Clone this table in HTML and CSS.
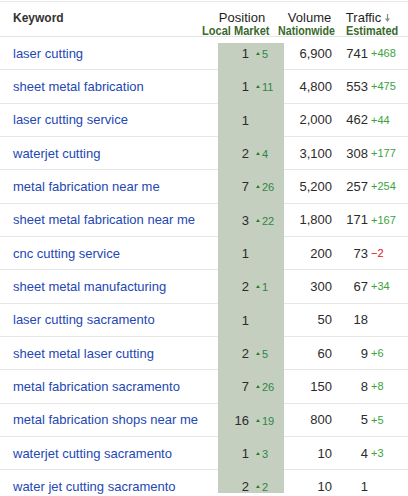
FILE: index.html
```html
<!DOCTYPE html>
<html>
<head>
<meta charset="utf-8">
<link rel="stylesheet" href="styles.css">
</head>
<body>
<div class="kw-table">
  <div class="head">
    <div class="h-kw">Keyword</div>
    <div class="h-col h-pos"><span class="h1">Position</span><span class="h2">Local Market</span></div>
    <div class="h-col h-vol"><span class="h1">Volume</span><span class="h2">Nationwide</span></div>
    <div class="h-col h-tr"><span class="h1">Traffic<svg class="sort" width="5" height="8" viewBox="0 0 5 8"><path d="M2.5 0V5" stroke="#8a8a8a" stroke-width="1.2"/><path d="M0 4.5H5L2.5 8Z" fill="#8a8a8a"/></svg></span><span class="h2">Estimated</span></div>
  </div>
  <div class="rows">
    <div class="row"><a class="kw">laser cutting</a><div class="pos"><span class="num">1</span><span class="up">5</span></div><div class="vol">6,900</div><div class="tr">741</div><div class="delta"><span class="plus">+468</span></div></div>
    <div class="row"><a class="kw">sheet metal fabrication</a><div class="pos"><span class="num">1</span><span class="up">11</span></div><div class="vol">4,800</div><div class="tr">553</div><div class="delta"><span class="plus">+475</span></div></div>
    <div class="row"><a class="kw">laser cutting service</a><div class="pos"><span class="num">1</span></div><div class="vol">2,000</div><div class="tr">462</div><div class="delta"><span class="plus">+44</span></div></div>
    <div class="row"><a class="kw">waterjet cutting</a><div class="pos"><span class="num">2</span><span class="up">4</span></div><div class="vol">3,100</div><div class="tr">308</div><div class="delta"><span class="plus">+177</span></div></div>
    <div class="row"><a class="kw">metal fabrication near me</a><div class="pos"><span class="num">7</span><span class="up">26</span></div><div class="vol">5,200</div><div class="tr">257</div><div class="delta"><span class="plus">+254</span></div></div>
    <div class="row"><a class="kw">sheet metal fabrication near me</a><div class="pos"><span class="num">3</span><span class="up">22</span></div><div class="vol">1,800</div><div class="tr">171</div><div class="delta"><span class="plus">+167</span></div></div>
    <div class="row"><a class="kw">cnc cutting service</a><div class="pos"><span class="num">1</span></div><div class="vol">200</div><div class="tr">73</div><div class="delta"><span class="minus">&minus;2</span></div></div>
    <div class="row"><a class="kw">sheet metal manufacturing</a><div class="pos"><span class="num">2</span><span class="up">1</span></div><div class="vol">300</div><div class="tr">67</div><div class="delta"><span class="plus">+34</span></div></div>
    <div class="row"><a class="kw">laser cutting sacramento</a><div class="pos"><span class="num">1</span></div><div class="vol">50</div><div class="tr">18</div><div class="delta"></div></div>
    <div class="row"><a class="kw">sheet metal laser cutting</a><div class="pos"><span class="num">2</span><span class="up">5</span></div><div class="vol">60</div><div class="tr">9</div><div class="delta"><span class="plus">+6</span></div></div>
    <div class="row"><a class="kw">metal fabrication sacramento</a><div class="pos"><span class="num">7</span><span class="up">26</span></div><div class="vol">150</div><div class="tr">8</div><div class="delta"><span class="plus">+8</span></div></div>
    <div class="row"><a class="kw">metal fabrication shops near me</a><div class="pos"><span class="num">16</span><span class="up">19</span></div><div class="vol">800</div><div class="tr">5</div><div class="delta"><span class="plus">+5</span></div></div>
    <div class="row"><a class="kw">waterjet cutting sacramento</a><div class="pos"><span class="num">1</span><span class="up">3</span></div><div class="vol">10</div><div class="tr">4</div><div class="delta"><span class="plus">+3</span></div></div>
    <div class="row"><a class="kw">water jet cutting sacramento</a><div class="pos"><span class="num">2</span><span class="up">2</span></div><div class="vol">10</div><div class="tr">1</div><div class="delta"></div></div>
  </div>
</div>
</body>
</html>
```
FILE: styles.css
```css
html, body {
  margin: 0;
  padding: 0;
  background: #fff;
}
body {
  font-family: "Liberation Sans", Arial, sans-serif;
  font-size: 13px;
  color: #2b2b2b;
}
.kw-table {
  width: 408px;
  padding-top: 1px;
}
.head {
  display: flex;
  height: 34px;
  border-top: 1px solid #e8e8e8;
  border-bottom: 1px solid #e4e4e4;
  white-space: nowrap;
}
.h-kw {
  width: 200px;
  box-sizing: border-box;
  padding: 10px 0 0 13px;
  font-weight: bold;
  font-size: 12px;
  line-height: 13px;
  color: #333;
}
.h-col {
  display: flex;
  flex-direction: column;
  align-items: flex-start;
  box-sizing: border-box;
  padding-top: 9px;
  line-height: 13px;
}
.h1 {
  color: #1e1e1e;
  font-size: 13px;
}
.h2 {
  display: inline-block;
  font-weight: bold;
  font-size: 13px;
  color: #3a6a2d;
  transform: scaleX(0.85);
  transform-origin: 0 0;
}
.h-pos { width: 79px; }
.h-pos .h1 { margin-left: 20px; }
.h-pos .h2 { margin-left: 3px; }
.h-vol { width: 66px; }
.h-vol .h1 { margin-left: 10px; }
.h-vol .h2 { margin-left: 0; transform: scaleX(0.82); }
.h-tr { flex: 1; }
.h-tr .h1 { margin-left: 2px; }
.h-tr .h2 { margin-left: 2px; transform: scaleX(0.84); }
.sort {
  margin-left: 4px;
  vertical-align: baseline;
}

.row {
  display: grid;
  grid-template-columns: 218px 66px 48px 36px 1fr;
  height: 33.333px;
}
.row > * {
  display: flex;
  align-items: center;
  box-sizing: border-box;
  border-bottom: 1px solid #e6e6e6;
  white-space: nowrap;
}
.kw {
  padding-left: 13px;
  color: #2447b3;
  text-decoration: none;
}
.pos {
  background: #c5cfc0;
  border-bottom-color: #c5cfc0 !important;
  align-items: baseline !important;
  padding-top: 9px;
}
.row:first-child .pos {
  background: linear-gradient(to bottom, #fff 6px, #c5cfc0 6px);
}
.row:last-child .pos {
  background: linear-gradient(to bottom, #c5cfc0 23px, #fff 23px);
  border-bottom-color: transparent !important;
}
.pos .num {
  width: 31px;
  text-align: right;
}
.up {
  margin-left: 7px;
  font-size: 11px;
  color: #2f8547;
}
.up::before {
  content: "";
  display: inline-block;
  width: 0;
  height: 0;
  border-left: 2px solid transparent;
  border-right: 2px solid transparent;
  border-bottom: 3px solid #2d7d2d;
  margin-right: 2px;
  vertical-align: 3px;
}
.vol, .tr {
  justify-content: flex-end;
}
.delta {
  padding-left: 3px;
  font-size: 11px;
  align-items: baseline !important;
  padding-top: 10px;
}
.plus { color: #3aa33c; }
.minus { color: #e01010; }
```
